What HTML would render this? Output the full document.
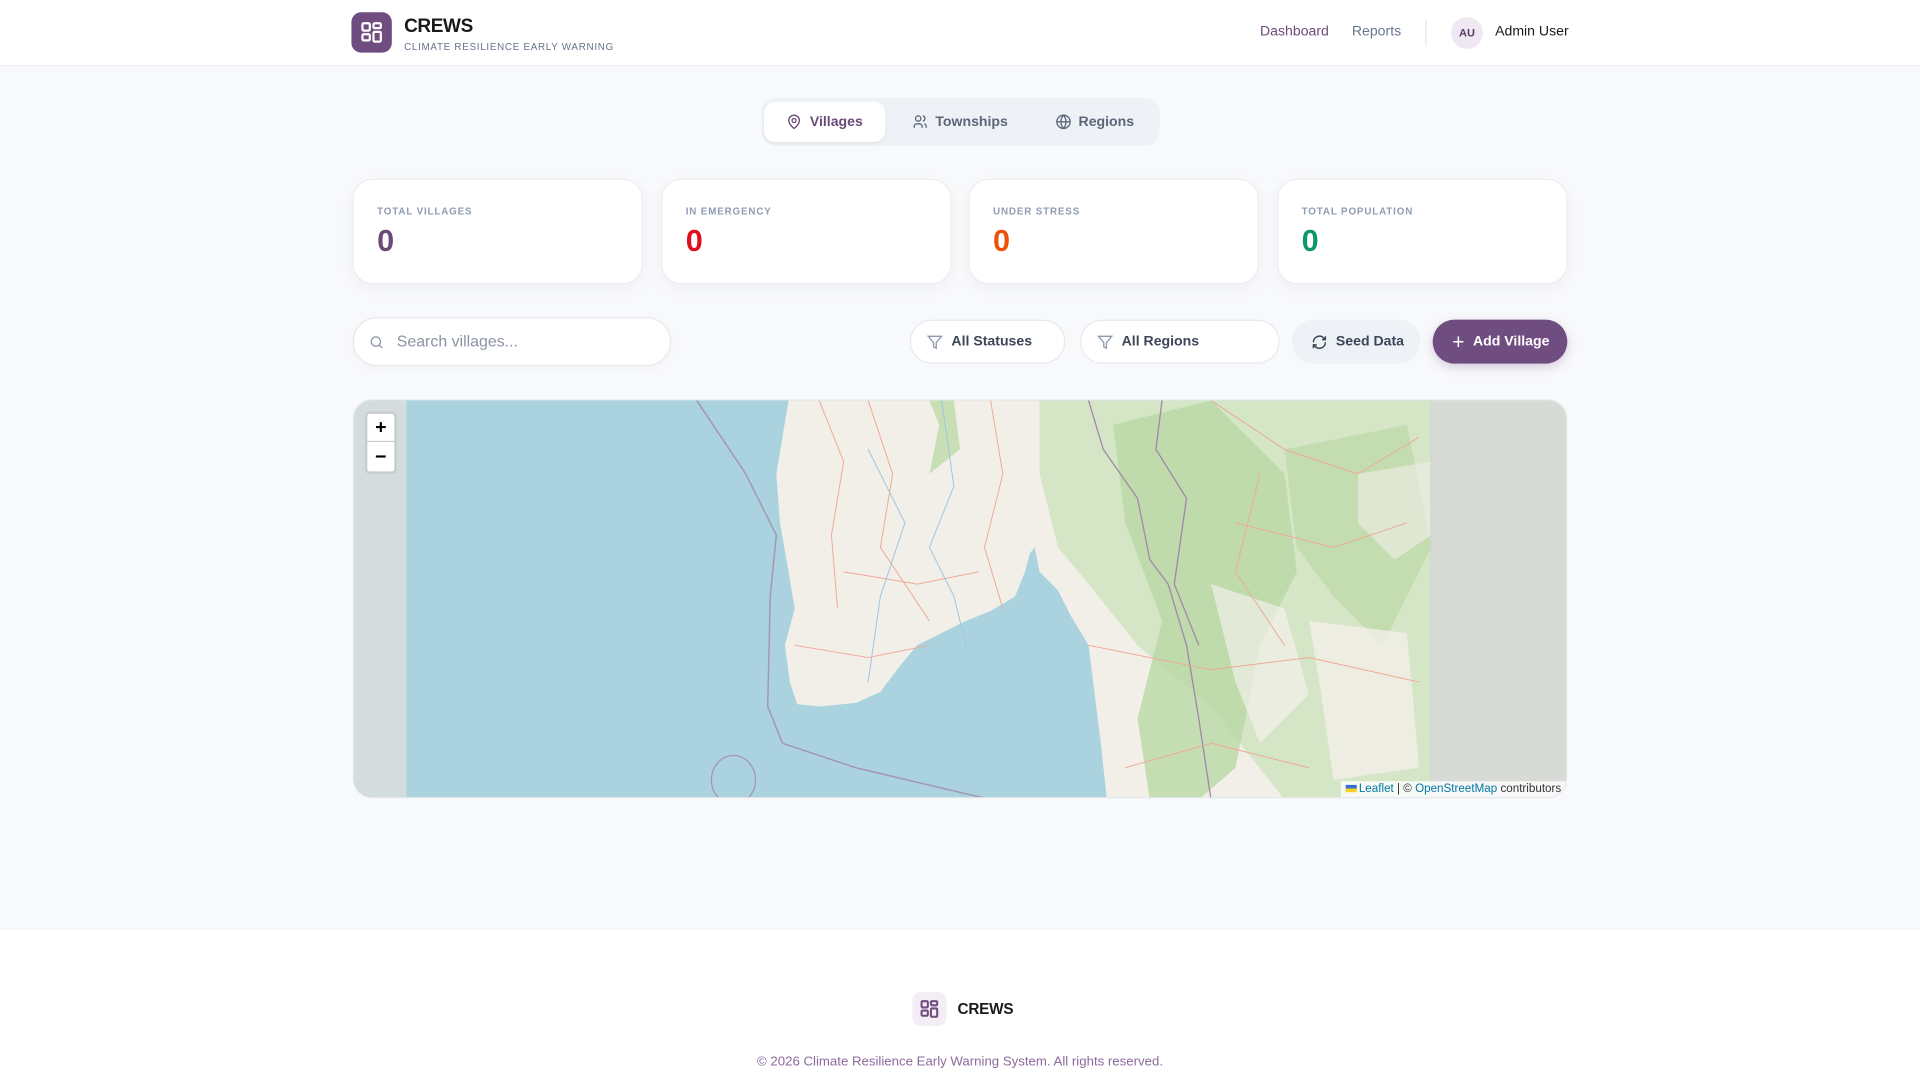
<!DOCTYPE html>
<html><head><meta charset="utf-8"><style>
*{box-sizing:border-box;margin:0;padding:0}
html,body{width:1920px;height:1080px;overflow:hidden;background:#f8f9fb;font-family:"Liberation Sans",sans-serif}
#w{width:1568px;height:882px;transform:scale(1.22449);transform-origin:0 0;position:relative;background:#f8f9fb}
.a{position:absolute}
.hdr{left:0;top:0;width:1568px;height:54px;background:#fff;border-bottom:1px solid #eef0f3}
.logo{left:287px;top:10px;width:33px;height:33px;border-radius:8px;background:#704d80}
.card{background:#fff;border:1px solid #eceef3;border-radius:16px;box-shadow:0 4px 12px rgba(30,40,80,.04);top:146px;width:237px;height:86px}
.card .l{position:absolute;left:19px;top:21px;font-size:8px;font-weight:bold;letter-spacing:.7px;color:#8e9bb3}
.card .v{position:absolute;left:19px;top:36px;font-size:25px;font-weight:bold}
.btn{border-radius:19px;height:36px;top:261px;font-size:11.5px;font-weight:bold;color:#3c4657;display:flex;align-items:center;gap:7px}
.tab{top:83px;height:33px;border-radius:9px;font-size:11.5px;font-weight:bold;color:#5b6678;display:flex;align-items:center;justify-content:center;gap:6px}
</style></head><body><div id="w">
<div class="a hdr"></div>
<div class="a logo"><svg width="33" height="33" viewBox="0 0 33 33" fill="none" stroke="#fff" stroke-width="1.8"><rect x="9" y="9" width="6" height="6" rx="1"/><rect x="18" y="9" width="6" height="4" rx="1"/><rect x="9" y="18" width="6" height="5" rx="1"/><rect x="18" y="16" width="6" height="8" rx="1"/></svg></div>
<div class="a" style="left:330px;top:13px;font-size:15.5px;font-weight:bold;color:#1a1a1a;letter-spacing:-.3px">CREWS</div>
<div class="a" style="left:330px;top:34px;font-size:8px;letter-spacing:.6px;color:#66728a">CLIMATE RESILIENCE EARLY WARNING</div>
<div class="a" style="left:1029px;top:20px;font-size:11.5px;color:#6b4a7a">Dashboard</div>
<div class="a" style="left:1104px;top:20px;font-size:11.5px;color:#6a7690">Reports</div>
<div class="a" style="left:1164px;top:16px;width:1px;height:22px;background:#e3e6ec"></div>
<div class="a" style="left:1185px;top:14px;width:26px;height:26px;border-radius:50%;background:#efe7f2;color:#5a3a6a;font-size:9px;font-weight:bold;text-align:center;line-height:26px">AU</div>
<div class="a" style="left:1221px;top:20px;font-size:11.5px;color:#1a1a1a">Admin User</div>

<div class="a" style="left:622px;top:80px;width:325px;height:39px;border-radius:11px;background:#eef2f7"></div>
<div class="a tab" style="left:624px;width:99px;background:#fff;color:#6b4a7a;box-shadow:0 1px 3px rgba(0,0,0,.06)"><svg width="13" height="13" viewBox="0 0 24 24" fill="none" stroke="#6b4a7a" stroke-width="2"><path d="M20 10c0 6-8 12-8 12S4 16 4 10a8 8 0 0 1 16 0z"/><circle cx="12" cy="10" r="3"/></svg>Villages</div>
<div class="a tab" style="left:734px;width:100px"><svg width="13" height="13" viewBox="0 0 24 24" fill="none" stroke="#5b6678" stroke-width="2"><circle cx="9" cy="7" r="4"/><path d="M3 21v-2a4 4 0 0 1 4-4h4a4 4 0 0 1 4 4v2M16 3.1a4 4 0 0 1 0 7.8M21 21v-2a4 4 0 0 0-3-3.9"/></svg>Townships</div>
<div class="a tab" style="left:850px;width:88px"><svg width="13" height="13" viewBox="0 0 24 24" fill="none" stroke="#5b6678" stroke-width="2"><circle cx="12" cy="12" r="10"/><path d="M2 12h20M12 2a15 15 0 0 1 0 20M12 2a15 15 0 0 0 0 20"/></svg>Regions</div>

<div class="a card" style="left:288px"><div class="l">TOTAL VILLAGES</div><div class="v" style="color:#6b4a7a">0</div></div>
<div class="a card" style="left:540px"><div class="l">IN EMERGENCY</div><div class="v" style="color:#e00d1c">0</div></div>
<div class="a card" style="left:791px"><div class="l">UNDER STRESS</div><div class="v" style="color:#f0510a">0</div></div>
<div class="a card" style="left:1043px"><div class="l">TOTAL POPULATION</div><div class="v" style="color:#0b9a63">0</div></div>

<div class="a" style="left:288px;top:259px;width:260px;height:40px;border-radius:20px;background:#fff;border:1px solid #e6e9ef;box-shadow:0 2px 6px rgba(0,0,0,.03)"></div>
<svg class="a" style="left:301px;top:273px" width="13" height="13" viewBox="0 0 24 24" fill="none" stroke="#8e99ab" stroke-width="2"><circle cx="11" cy="11" r="7"/><path d="M21 21l-5-5"/></svg>
<div class="a" style="left:324px;top:271px;font-size:13px;color:#8a93a3">Search villages...</div>

<div class="a btn" style="left:743px;width:127px;background:#fff;border:1px solid #e6e9ef;padding-left:13px"><svg width="13" height="13" viewBox="0 0 24 24" fill="none" stroke="#8e99ab" stroke-width="2"><path d="M22 3H2l8 9.5V19l4 2v-8.5z"/></svg>All Statuses</div>
<div class="a btn" style="left:882px;width:163px;background:#fff;border:1px solid #e6e9ef;padding-left:13px"><svg width="13" height="13" viewBox="0 0 24 24" fill="none" stroke="#8e99ab" stroke-width="2"><path d="M22 3H2l8 9.5V19l4 2v-8.5z"/></svg>All Regions</div>
<div class="a btn" style="left:1055px;width:105px;background:#eef2f7;padding-left:16px"><svg width="13" height="13" viewBox="0 0 24 24" fill="none" stroke="#3c4657" stroke-width="2.2"><path d="M21 12a9 9 0 0 1-15.5 6.3L3 16M3 12a9 9 0 0 1 15.5-6.3L21 8M21 3v5h-5M3 21v-5h5"/></svg>Seed Data</div>
<div class="a btn" style="left:1170px;width:110px;background:#704d80;color:#fff;padding-left:16px;box-shadow:0 3px 8px rgba(112,77,128,.25)"><span style="font-size:17px;font-weight:normal;line-height:1">+</span>Add Village</div>

<div class="a" style="left:288px;top:326px;width:992px;height:326px;border-radius:16px;overflow:hidden;background:#aad3df;border:1px solid #e8ebf0">
<svg width="992" height="326" viewBox="0 0 992 326">
<path d="M355 0L350 30 345 60 348 100 355 140 360 170 352 200 356 230 362 248 380 250 410 247 430 238 445 218 460 200 480 190 500 180 520 172 540 160 548 140 552 125 556 120 560 140 575 155 585 175 600 200 605 240 610 280 615 326 992 326 992 0Z" fill="#f2efe9"/>
<path d="M470 0L490 0 495 40 470 60 478 20Z" fill="#c8dfb5"/>
<path d="M560 0L880 0 880 326 760 326 700 250 640 200 600 150 575 120 560 60Z" fill="#d5e6c6"/>
<path d="M620 20L700 0 760 60 770 140 740 200 720 300 690 326 650 326 640 260 660 180 630 100Z" fill="#b9d8a4" opacity=".8"/>
<path d="M760 40L860 20 880 120 840 200 800 160 770 120Z" fill="#bcd9a7" opacity=".7"/>
<path d="M700 150L760 170 780 240 740 280 720 230Z" fill="#f2efe9" opacity=".7"/>
<path d="M780 180L860 190 870 300 800 310 790 240Z" fill="#f2efe9" opacity=".8"/>
<path d="M820 60L880 50 880 110 850 130 820 100Z" fill="#f2efe9" opacity=".6"/>
<path d="M600 0L612 40 640 80 650 130 665 150 680 200 690 260 700 326M660 0L655 40 680 80 670 150 690 200" fill="none" stroke="#a08aa8" stroke-width="1.1"/>
<path d="M280 0L320 60 345 110 340 160 338 250 350 280 410 300 520 326" fill="none" stroke="#a595b5" stroke-width="1.2"/>
<path d="M520 0L530 60 515 120 530 170M420 0L440 60 430 120 470 180M380 0L400 50 390 110 395 170M700 0L760 40 820 60 870 30M720 100L800 120 860 100M600 200L700 220 780 210 870 230M630 300L700 280 780 300M740 60L720 140 760 200M400 140L460 150 510 140M360 200L420 210 470 200" fill="none" stroke="#f0a896" stroke-width=".8"/>
<path d="M480 0L490 70 470 120 490 160 500 200M420 40L450 100 430 160 420 230" fill="none" stroke="#9fc4de" stroke-width=".8"/>
<ellipse cx="310" cy="310" rx="18" ry="20" fill="none" stroke="#a595b5" stroke-width="1"/>
<rect x="0" y="0" width="43" height="326" fill="#d5dcdd"/>
<rect x="879" y="0" width="113" height="326" fill="#cfd3cf" opacity=".75"/>
</svg>
<div class="a" style="left:9px;top:9px;width:26px;height:51px;background:#fff;border:2px solid #c8cccf;border-radius:4px"></div>
<div class="a" style="left:11px;top:11px;width:22px;height:23px;text-align:center;font-size:16px;font-weight:bold;line-height:23px;border-bottom:1px solid #ccc">+</div>
<div class="a" style="left:11px;top:35px;width:22px;height:23px;text-align:center;font-size:16px;font-weight:bold;line-height:23px">−</div>
<div class="a" style="right:0;bottom:0;background:rgba(255,255,255,.8);padding:1px 4px;font-size:9.5px;color:#333"><span style="display:inline-block;width:9px;height:6px;background:linear-gradient(#3b6bd6 50%,#f5d224 50%);margin-right:2px"></span><span style="color:#0078a8">Leaflet</span> | © <span style="color:#0078a8">OpenStreetMap</span> contributors</div>
</div>

<div class="a" style="left:0;top:758px;width:1568px;height:124px;background:#fff;border-top:1px solid #f0f1f4"></div>
<div class="a" style="left:745px;top:810px;width:28px;height:28px;border-radius:7px;background:#f3eef5"><svg width="28" height="28" viewBox="0 0 33 33" fill="none" stroke="#704d80" stroke-width="2"><rect x="9" y="9" width="6" height="6" rx="1"/><rect x="18" y="9" width="6" height="4" rx="1"/><rect x="9" y="18" width="6" height="5" rx="1"/><rect x="18" y="16" width="6" height="8" rx="1"/></svg></div>
<div class="a" style="left:782px;top:817px;font-size:12.5px;font-weight:bold;color:#1a1a1a;letter-spacing:-.2px">CREWS</div>
<div class="a" style="left:0;width:1568px;top:861px;text-align:center;font-size:10.8px;color:#8b6a9b">© 2026 Climate Resilience Early Warning System. All rights reserved.</div>
</div></body></html>
